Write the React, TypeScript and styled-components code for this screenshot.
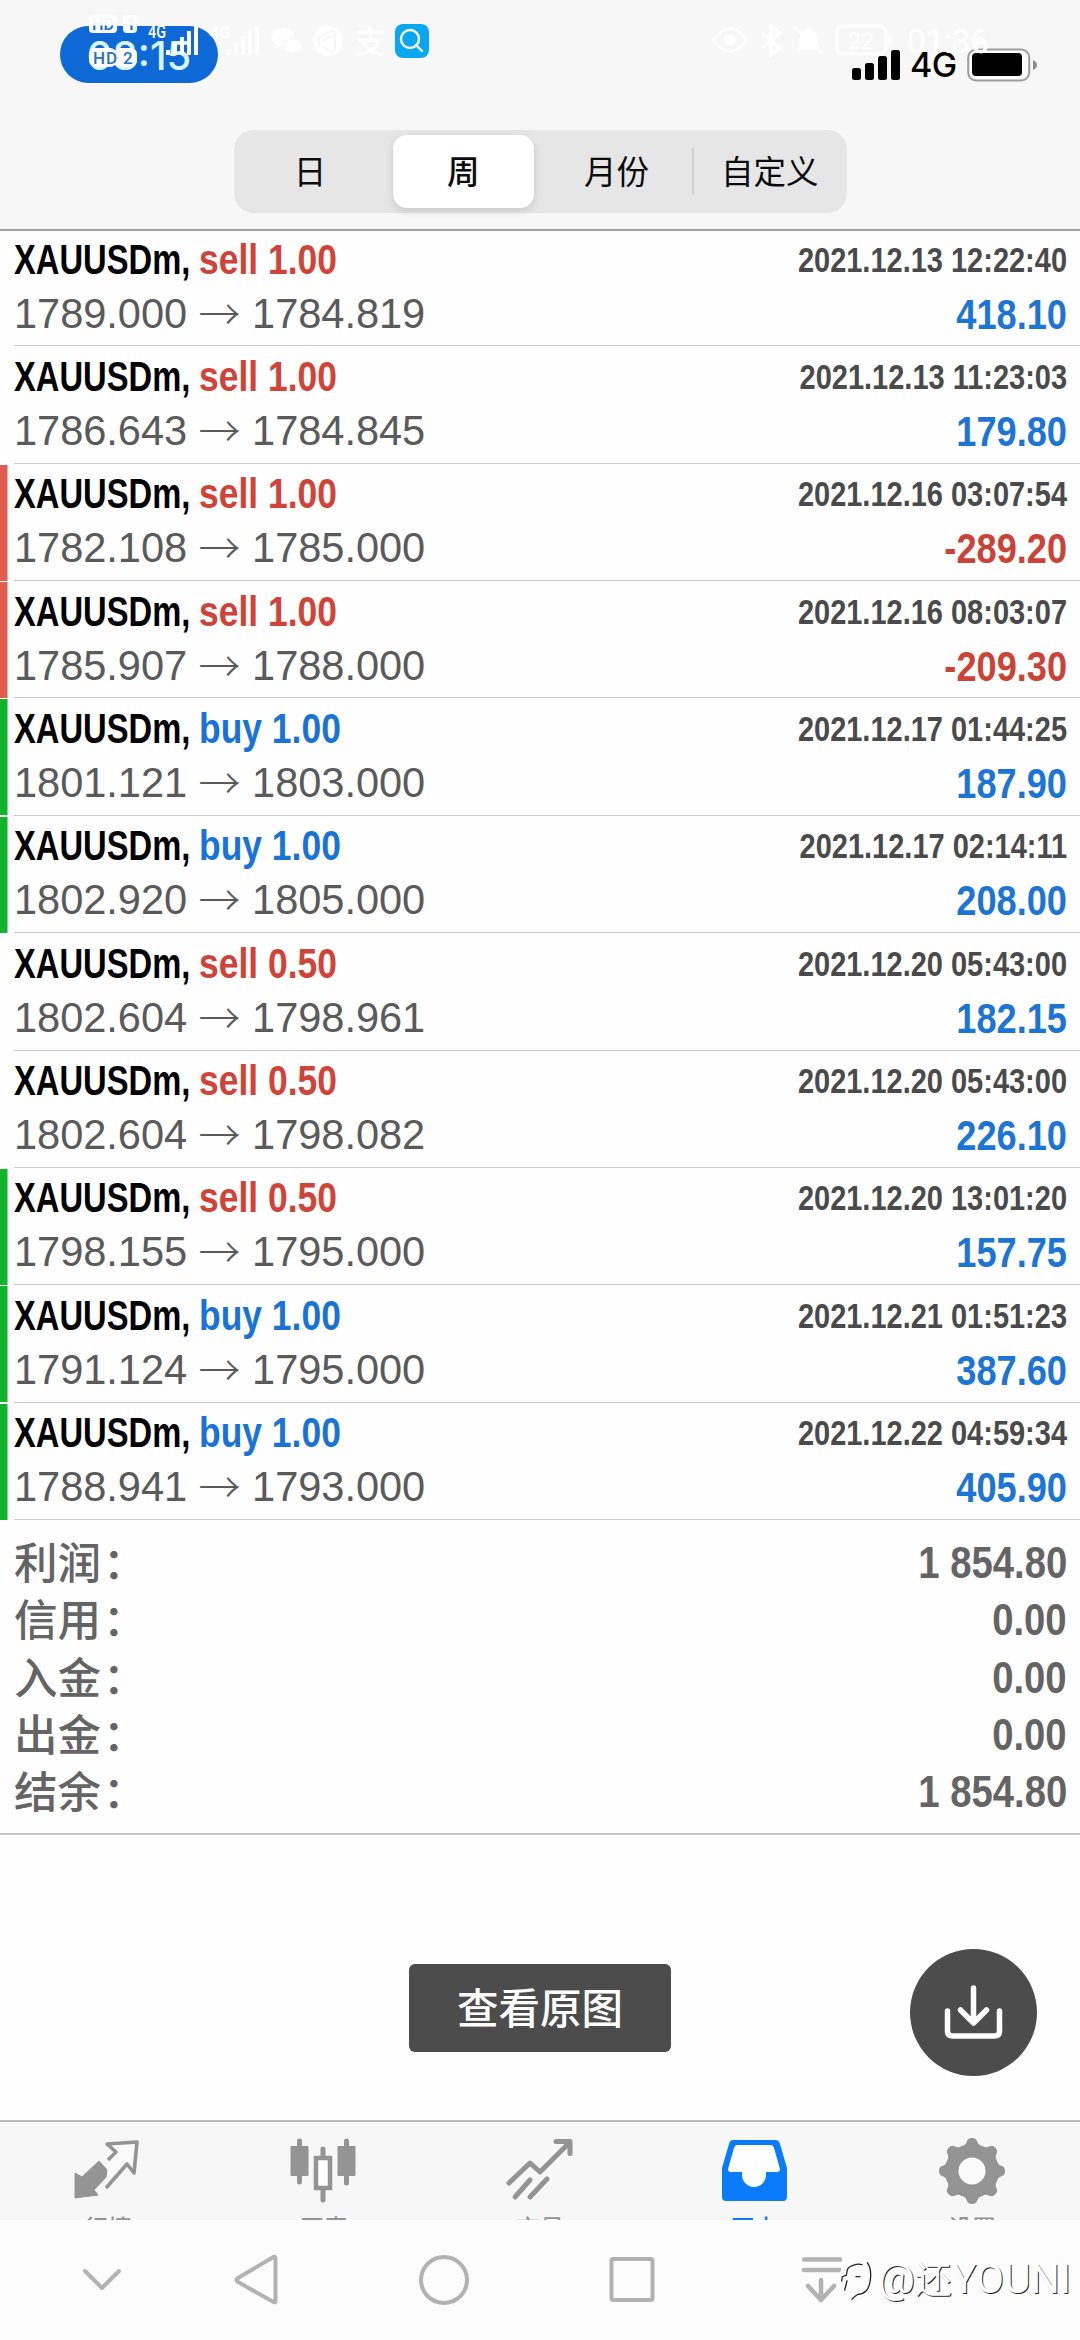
import React from "react";
import styled, { createGlobalStyle } from "styled-components";

const Global = createGlobalStyle`
  * { box-sizing: border-box; }
  html, body { margin: 0; padding: 0; background: #fdfdfd; }
  body { width: 1080px; font-family: "Liberation Sans", "Noto Sans CJK SC", sans-serif; }
`;

const Screen = styled.div`
  width: 1080px;
  height: 2340px;
  display: flex;
  flex-direction: column;
  position: relative;
  overflow: hidden;
  background: #fefefe;
`;

const Header = styled.header`
  height: 229px;
  flex: none;
  position: relative;
  z-index: 1;
  display: flex;
  flex-direction: column;
  align-items: center;
  background: #f7f7f7;
  box-shadow: 0 2px 0 #a0a0a0;
`;

const PhoneStatus = styled.div`
  width: 100%;
  height: 130px;
  padding: 26px 42px 0 60px;
  display: flex;
  justify-content: space-between;
  align-items: flex-start;
`;

const TimePill = styled.div`
  width: 158px;
  height: 57px;
  border-radius: 29px;
  background: #0e69d6;
  color: #d6f6ff;
  font: 500 40px/59px Inter, "Liberation Sans", sans-serif;
  text-align: center;
`;

const PhoneSignals = styled.div`
  display: flex;
  padding-top: 22px;
  align-items: flex-start;
`;

const NetLabel = styled.span`
  width: 47px;
  margin: 0 10px 0 9px;
  font: 500 34px/34px Inter, "Liberation Sans", sans-serif;
  letter-spacing: -0.5px;
  color: #000;
`;

const Overlay = styled.svg`
  position: absolute;
  left: 0;
  top: 0;
`;

const Segments = styled.div`
  width: 613px;
  height: 83px;
  border-radius: 20px;
  background: #e6e6e7;
  display: grid;
  grid-template-columns: repeat(4, 1fr);
  align-items: center;
`;

const Segment = styled.div<{ $active?: boolean; $divider?: boolean }>`
  height: 73px;
  margin: 0 6px;
  border-radius: 14px;
  display: flex;
  align-items: center;
  justify-content: center;
  position: relative;
  font: ${(p) => (p.$active ? 500 : 400)} 32.5px/70px "Noto Sans CJK SC", sans-serif;
  padding-bottom: 3px;
  white-space: nowrap;
  color: #0c0c0c;
  background: ${(p) => (p.$active ? "#fff" : "transparent")};
  box-shadow: ${(p) => (p.$active ? "0 3px 8px rgba(0,0,0,.14)" : "none")};
  &::after {
    content: "";
    display: ${(p) => (p.$divider ? "block" : "none")};
    position: absolute;
    right: -7px;
    top: 13px;
    width: 2px;
    height: 46px;
    background: #cfcfcf;
  }
`;

const List = styled.div`
  flex: none;
`;

const Row = styled.div<{ $bar: string }>`
  height: 117.36px;
  display: flex;
  background: linear-gradient(${(p) => p.$bar}, ${(p) => p.$bar}) 0 1px / 7.5px 116px no-repeat;
  padding-left: 14px;
`;

const RowBody = styled.div`
  flex: 1;
  display: flex;
  flex-direction: column;
  border-bottom: 1.5px solid #c9c9c9;
`;

const Line = styled.div<{ $top?: number }>`
  display: flex;
  justify-content: space-between;
  align-items: center;
  height: 54px;
  margin-top: ${(p) => p.$top || 0}px;
  padding-right: 13px;
  white-space: nowrap;
`;

const Deal = styled.div`
  display: flex;
  font: 700 42.5px/54px "Liberation Sans", Arial, sans-serif;
`;

const Symbol = styled.span`
  width: 185px;
  color: #000;
  transform: scaleX(0.77);
  transform-origin: 0 50%;
`;

const Side = styled.span<{ $buy: boolean }>`
  color: ${(p) => (p.$buy ? "#1873d6" : "#cf4338")};
  transform: scaleX(0.834);
  transform-origin: 0 50%;
`;

const Stamp = styled.span`
  font: 700 35px/54px "Liberation Sans", Arial, sans-serif;
  color: #4a4a4a;
  transform: scaleX(0.828);
  transform-origin: 100% 50%;
`;

const Prices = styled.div`
  display: flex;
  font: 400 41.6px/54px "Liberation Sans", Arial, sans-serif;
  letter-spacing: -0.05px;
  color: #5a5a5a;
`;

const Arrow = styled.span`
  width: 65px;
  text-align: center;
  font: 300 42px/50px "Noto Sans CJK SC", sans-serif;
`;

const Amount = styled.span<{ $loss: boolean }>`
  font: 700 42.5px/56px "Liberation Sans", Arial, sans-serif;
  color: ${(p) => (p.$loss ? "#cb4236" : "#1c74d4")};
  padding-top: 2px;
  transform: scaleX(0.852);
  transform-origin: 100% 50%;
`;

const Summary = styled.div`
  height: 315px;
  flex: none;
  padding: 14px 13px 0 14px;
  border-bottom: 2px solid #c6c6c6;
`;

const SumRow = styled.div`
  height: 57.3px;
  display: flex;
  justify-content: space-between;
  align-items: center;
  color: #646464;
`;

const SumLabel = styled.span`
  font: 500 43.5px/57px "Noto Sans CJK SC", sans-serif;
  padding-bottom: 4px;
`;

const Colon = styled.span`
  margin-left: 2px;
`;

const SumValue = styled.span`
  font: 700 44.5px/57px "Liberation Sans", Arial, sans-serif;
  transform: scaleX(0.86);
  transform-origin: 100% 50%;
`;

const Blank = styled.div`
  flex: 1;
  display: grid;
  grid-template-columns: 1fr 262px 1fr;
  align-items: start;
  padding-top: 114px;
`;

const ViewButton = styled.button`
  grid-column: 2;
  height: 88px;
  margin: 15px 0 0;
  padding: 0 0 3px;
  border: 0;
  border-radius: 6px;
  background: #4c4c4c;
  color: #fff;
  font: 500 41.5px/85px "Noto Sans CJK SC", sans-serif;
`;

const SaveButton = styled.button`
  justify-self: end;
  margin-right: 43px;
  width: 127px;
  height: 127px;
  padding: 0;
  border: 0;
  border-radius: 50%;
  background: #4c4c4c;
`;

const TabBar = styled.nav`
  height: 100px;
  flex: none;
  overflow: hidden;
  border-top: 2px solid #bdbdbd;
  background: #f7f7f7;
  display: grid;
  grid-template-columns: repeat(5, 216px);
`;

const Tab = styled.div<{ $on?: boolean }>`
  display: flex;
  flex-direction: column;
  align-items: center;
  padding-top: 7px;
  padding-right: ${(p) => (p.$on ? 4 : 0)}px;
  color: ${(p) => (p.$on ? "#0a7bfb" : "#949494")};
`;

const TabLabel = styled.span`
  margin-top: 3px;
  font: 500 24px/30px "Noto Sans CJK SC", sans-serif;
`;

const NavBar = styled.footer`
  height: 120px;
  flex: none;
  background: #fcfcfc;
  display: flex;
  align-items: center;
`;

const NavKey = styled.svg<{ $gap: number }>`
  flex: none;
  margin-left: ${(p) => p.$gap}px;
`;

const Watermark = styled.div`
  position: absolute;
  right: 9px;
  bottom: 35px;
  display: flex;
  align-items: center;
  gap: 4px;
  color: #fff;
  font: 400 41px/48px Roboto, "Noto Sans CJK SC", sans-serif;
  text-shadow: 1px 1px 0 #222;
  white-space: nowrap;
`;

const Han = styled.span`
  font-size: 37px;
`;

type DealData = [string, string, string, string, string, string, string];
const NONE = "transparent";
const RED = "#df5d50";
const GREEN = "#12b32d";

const deals: DealData[] = [
  ["sell", "1.00", "1789.000", "1784.819", "2021.12.13 12:22:40", "418.10", NONE],
  ["sell", "1.00", "1786.643", "1784.845", "2021.12.13 11:23:03", "179.80", NONE],
  ["sell", "1.00", "1782.108", "1785.000", "2021.12.16 03:07:54", "-289.20", RED],
  ["sell", "1.00", "1785.907", "1788.000", "2021.12.16 08:03:07", "-209.30", RED],
  ["buy", "1.00", "1801.121", "1803.000", "2021.12.17 01:44:25", "187.90", GREEN],
  ["buy", "1.00", "1802.920", "1805.000", "2021.12.17 02:14:11", "208.00", GREEN],
  ["sell", "0.50", "1802.604", "1798.961", "2021.12.20 05:43:00", "182.15", NONE],
  ["sell", "0.50", "1802.604", "1798.082", "2021.12.20 05:43:00", "226.10", NONE],
  ["sell", "0.50", "1798.155", "1795.000", "2021.12.20 13:01:20", "157.75", GREEN],
  ["buy", "1.00", "1791.124", "1795.000", "2021.12.21 01:51:23", "387.60", GREEN],
  ["buy", "1.00", "1788.941", "1793.000", "2021.12.22 04:59:34", "405.90", GREEN],
];

const totals = [
  ["利润", "1 854.80"],
  ["信用", "0.00"],
  ["入金", "0.00"],
  ["出金", "0.00"],
  ["结余", "1 854.80"],
];

const SystemStatus = () => (
  <Overlay width="1080" height="100" viewBox="0 0 1080 100">
    <defs>
      <linearGradient id="badgeInk" gradientUnits="userSpaceOnUse" x1="0" y1="25" x2="0" y2="26">
        <stop offset="0" stopColor="#f4f4f4" />
        <stop offset="1" stopColor="#0e69d6" />
      </linearGradient>
    </defs>
    <g fill="#fff">
      <rect x="89" y="15" width="28" height="18" rx="4" />
      <rect x="123" y="15" width="14" height="18" rx="4" />
      <rect x="89" y="48" width="28" height="19" rx="7" />
      <rect x="114" y="48" width="23" height="19" rx="6" />
      <text x="148" y="38" fontFamily="Roboto" fontSize="18" fontWeight="500" textLength="18" lengthAdjust="spacingAndGlyphs">4G</text>
      <path d="M166 50h4v5h-4zM173 42h4v13h-4zM180 37h4v18h-4zM187 31h4v24h-4zM194 26h4v29h-4z" />
      <path d="M227 50h4v5h-4zM234 43h4v12h-4zM241 37h4v18h-4zM248 31h4v24h-4zM255 26h4v29h-4z" />
      <text x="209" y="38" fontFamily="Roboto" fontSize="17" fontWeight="500">4G</text>
      <ellipse cx="283" cy="37" rx="11.5" ry="9" />
      <path d="M276 43l-1 6 6-4z" />
      <ellipse cx="293" cy="46" rx="9.5" ry="7.5" stroke="#f7f7f7" strokeWidth="1.5" />
      <circle cx="328" cy="41" r="15" />
      <text x="355" y="53" fontFamily="Noto Sans CJK SC" fontSize="31" fontWeight="500">支</text>
    </g>
    <g fontFamily="Roboto" fontWeight="500">
      <g fill="url(#badgeInk)" fontSize="17">
        <text x="92" y="30" textLength="22" lengthAdjust="spacingAndGlyphs">HD</text>
        <text x="126" y="30">1</text>
      </g>
      <g fill="#2b6fc4" fontSize="17">
        <text x="93" y="64" textLength="24">HD</text>
        <text x="123" y="64">2</text>
      </g>
    </g>
    <path d="M334 30l-15 8v7l15 8M321 42l14-8v18" fill="none" stroke="#f7f7f7" strokeWidth="2" />
    <rect x="395" y="24" width="34" height="34" rx="8" fill="#08a7f2" />
    <g fill="none" stroke="#fff" strokeWidth="2.4" strokeLinecap="round">
      <circle cx="410" cy="39" r="9" />
      <path d="M416 45l6 6" />
    </g>
    <g fill="none" stroke="#fff" strokeWidth="3">
      <path d="M713 40q17-23 34 0q-17 23-34 0z" />
      <path d="M762 33l18 15-9 7V26l9 7-18 15" />
      <rect x="837" y="26" width="49" height="28" rx="6" />
      <path d="M794 27l28 26" />
    </g>
    <g fill="#fff">
      <circle cx="730" cy="40" r="6" />
      <path d="M796 50c4-5 3-10 4-14 2-6 6-6 8-10 3 4 7 4 9 10 1 5 0 9 4 14z" />
      <rect x="888" y="35" width="4" height="10" rx="2" />
      <text x="848" y="49" fontFamily="Roboto" fontSize="23">22</text>
      <text x="907" y="53" fontFamily="Roboto" fontSize="34" textLength="82">01:36</text>
    </g>
    <circle cx="981" cy="47" r="5" fill="none" stroke="#fff" strokeWidth="3" />
  </Overlay>
);

const icons = [
  <g key="q">
    <path d="M2 36v25l23-3-4-5 16-17-11-12L9 40z" fill="currentColor" stroke="currentColor" strokeLinejoin="round" />
    <path d="M35 23l8-8-9-8 30-2-3 31-7-9-21 24" fill="#fafafa" stroke="currentColor" strokeWidth="3.6" strokeLinejoin="round" />
  </g>,
  <g key="c" fill="currentColor">
    <path d="M2.500 10h16v28h-16zM49.500 10h16v28h-16z" stroke="currentColor" strokeWidth="2" strokeLinejoin="round" />
    <path d="M10.500 4v41M57.500 4v42M34 12v10M34 52v11" stroke="currentColor" strokeWidth="5" strokeLinecap="round" />
    <rect x="27" y="21" width="14" height="30" fill="#fff" stroke="currentColor" strokeWidth="4.500" />
  </g>,
  <g key="t" fill="none" stroke="currentColor" strokeWidth="5" strokeLinecap="round" strokeLinejoin="round">
    <path d="M4 46l21-20 10 9L64 6M51 4.500h14v12" />
    <path d="M10 60l15-17M25 60l17-18" />
  </g>,
  <g key="h">
    <path d="M14 3h42q4 0 5 4l7 24v29q0 4-4 4H7q-4 0-4-4V31L10 7q1-4 4-4z" fill="currentColor" />
    <path d="M18 8h34q2 0 3 3l6 21q0 3-3 3H47v3c0 6-5 12-12 12s-12-6-12-12v-3H12q-3 0-3-3L15 11q1-3 3-3z" fill="#fff" />
  </g>,
  <g key="s">
    <g fill="currentColor">
      <circle cx="35" cy="34" r="27" />
      {[0, 45, 90, 135, 180, 225, 270, 315].map((a) => (
        <path key={a} d="M24 10q5-2 6-6 1-3 5-3t5 3q1 4 6 6v8H24z" transform={`rotate(${a} 35 34)`} />
      ))}
    </g>
    <circle cx="35" cy="34" r="13.500" fill="#fafafa" />
  </g>,
];
const tabNames = ["行情", "图表", "交易", "历史", "设置"];

export default function App() {
  return (
    <Screen>
      <Global />
      <Header>
        <PhoneStatus>
          <TimePill>08:15</TimePill>
          <PhoneSignals>
            <svg width="49" height="34" viewBox="0 0 49 34">
              <rect x="0" y="20" width="9" height="12" rx="2.500" />
              <rect x="13" y="15" width="9" height="17" rx="2.500" />
              <rect x="26" y="8" width="9" height="24" rx="2.500" />
              <rect x="39" y="2" width="9" height="30" rx="2.500" />
            </svg>
            <NetLabel>4G</NetLabel>
            <svg width="71" height="36" viewBox="0 0 71 36">
              <rect x="1.200" y="1.500" width="61" height="31" rx="8" fill="#fbfbfb" stroke="#9c9c9c" strokeWidth="2" />
              <rect x="5" y="5" width="50" height="23" rx="4" />
              <path d="M66 12q4 2 4 5t-4 5z" fill="#8d8d8d" />
            </svg>
          </PhoneSignals>
        </PhoneStatus>
        <SystemStatus />
        <Segments>
          <Segment>日</Segment>
          <Segment $active>周</Segment>
          <Segment $divider>月份</Segment>
          <Segment>自定义</Segment>
        </Segments>
      </Header>
      <List>
        {deals.map(([side, lots, open, close, stamp, amount, bar], i) => (
          <Row key={i} $bar={bar}>
            <RowBody>
              <Line $top={3.5}>
                <Deal>
                  <Symbol>XAUUSDm,</Symbol>
                  <Side $buy={side === "buy"}>{side} {lots}</Side>
                </Deal>
                <Stamp>{stamp}</Stamp>
              </Line>
              <Line>
                <Prices>
                  <span>{open}</span>
                  <Arrow>→</Arrow>
                  <span>{close}</span>
                </Prices>
                <Amount $loss={amount.startsWith("-")}>{amount}</Amount>
              </Line>
            </RowBody>
          </Row>
        ))}
      </List>
      <Summary>
        {totals.map(([label, value]) => (
          <SumRow key={label}>
            <SumLabel>{label}<Colon>：</Colon></SumLabel>
            <SumValue>{value}</SumValue>
          </SumRow>
        ))}
      </Summary>
      <Blank>
        <ViewButton>查看原图</ViewButton>
        <SaveButton aria-label="save">
          <svg width="127" height="127" viewBox="0 0 127 127" fill="none" stroke="#fff" strokeWidth="5.500" strokeLinecap="round" strokeLinejoin="round">
            <path d="M63.500 39v34M50.500 61l13 13 13-13M37.500 62v20q0 5 5 5h42q5 0 5-5V62" />
          </svg>
        </SaveButton>
      </Blank>
      <TabBar>
        {icons.map((icon, i) => (
          <Tab key={i} $on={i === 3}>
            <svg width="70" height="80" viewBox="0 -8 70 80">{icon}</svg>
            <TabLabel>{tabNames[i]}</TabLabel>
          </Tab>
        ))}
      </TabBar>
      <NavBar>
        <NavKey $gap={81} width="42" height="60" viewBox="0 0 42 60" fill="none" stroke="#b2b2b2" strokeWidth="4" strokeLinecap="round" strokeLinejoin="round">
          <path d="M4 21l17 17 17-17" />
        </NavKey>
        <NavKey $gap={110} width="48" height="60" viewBox="0 0 48 60" fill="none" stroke="#b2b2b2" strokeWidth="4" strokeLinejoin="round">
          <path d="M42.500 9v42q0 2-2 1L5 32q-3-2 0-4L40.500 7q2-1 2 2z" />
        </NavKey>
        <NavKey $gap={135} width="56" height="60" viewBox="0 0 56 60" fill="none" stroke="#b2b2b2" strokeWidth="4">
          <circle cx="28" cy="30" r="23" />
        </NavKey>
        <NavKey $gap={132} width="56" height="60" viewBox="0 0 56 60" fill="none" stroke="#b2b2b2" strokeWidth="4">
          <rect x="7.500" y="9" width="41" height="41" rx="2" />
        </NavKey>
        <NavKey $gap={140} width="44" height="60" viewBox="0 0 44 60" fill="none" stroke="#b2b2b2" strokeWidth="4.500" strokeLinecap="round" strokeLinejoin="round">
          <path d="M4 9.500h36M4 20h36M21 30v20M8 36l13 14 13-14" />
        </NavKey>
      </NavBar>
      <Watermark>
        <svg width="38" height="48" viewBox="0 0 38 48" fill="none" strokeLinecap="round">
          <path d="M8 32V22C8 11 13 6 20 6s12 6 12 15-6 14-14 16" stroke="#fcfcfc" strokeWidth="8" />
          <g stroke="#222" strokeWidth="1.300">
            <path d="M31.300 6.700Q35 12 34.700 20Q34 31 30 35Q27 38 22 38.300Q19 40 16 43.300" />
            <path d="M26 8.700Q22 7.500 17 9.300Q12 11 11.300 14L10.300 19.300L6.300 20.700L5.700 25M11 25L8.700 34M20 20.700h4" />
          </g>
        </svg>
        <span>@<Han>还</Han>YOUNI</span>
      </Watermark>
    </Screen>
  );
}
